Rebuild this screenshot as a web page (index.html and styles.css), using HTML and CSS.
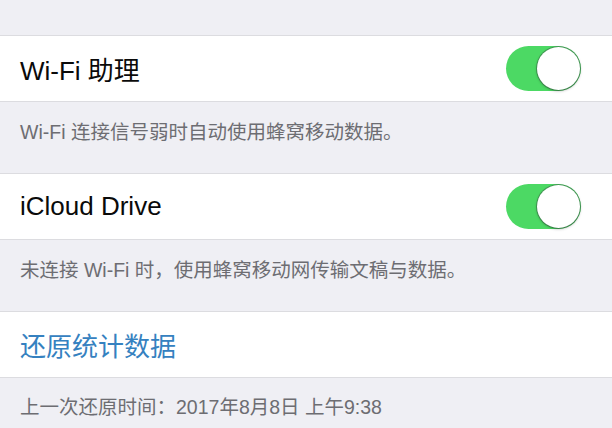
FILE: index.html
```html
<!DOCTYPE html>
<html lang="zh-CN">
<head>
    <meta charset="UTF-8">
    <meta name="viewport" content="width=device-width, initial-scale=1.0">
    <title>蜂窝移动网络</title>
    <link rel="stylesheet" href="styles.css">
</head>
<body>
    <div class="settings">
        <div class="group">
            <div class="cell">
                <span class="cell-title">Wi-Fi 助理</span>
                <span class="switch on"><span class="knob"></span></span>
            </div>
            <div class="footer">Wi-Fi 连接信号弱时自动使用蜂窝移动数据。</div>
        </div>

        <div class="group">
            <div class="cell">
                <span class="cell-title">iCloud Drive</span>
                <span class="switch on"><span class="knob"></span></span>
            </div>
            <div class="footer">未连接 Wi-Fi 时，使用蜂窝移动网传输文稿与数据。</div>
        </div>

        <div class="group">
            <div class="cell">
                <span class="cell-title link">还原统计数据</span>
            </div>
            <div class="footer last">上一次还原时间：2017年8月8日 上午9:38</div>
        </div>
    </div>
</body>
</html>
```

FILE: styles.css
```css
body {
    margin: 0;
    background-color: #efeff4;
    font-family: "Liberation Sans", "Noto Sans CJK SC", sans-serif;
    color: #0a0a0a;
    overflow: hidden;
}

.settings {
    padding-top: 35px;
}

.cell {
    display: flex;
    align-items: center;
    justify-content: space-between;
    height: 65px;
    padding: 0 31px 0 20px;
    background: #fff;
    border-top: 1px solid #dcdce0;
    border-bottom: 1px solid #dcdce0;
}

.cell-title {
    font-size: 26px;
}

.cell-title.link {
    color: #3581c0;
}

.footer {
    height: 71px;
    padding: 14px 20px 0;
    box-sizing: border-box;
    font-size: 19.5px;
    color: #6d6d72;
}

.footer.last {
    padding-top: 13px;
}

.switch {
    position: relative;
    width: 75px;
    height: 45px;
    border-radius: 23px;
    background: #4cd964;
}

.switch .knob {
    position: absolute;
    top: 1px;
    right: 1px;
    width: 43px;
    height: 43px;
    border-radius: 50%;
    background: #fff;
    box-shadow: 0 1px 3px rgba(0, 0, 0, 0.3), 0 0 0 1px rgba(60, 90, 70, 0.45);
}
```
